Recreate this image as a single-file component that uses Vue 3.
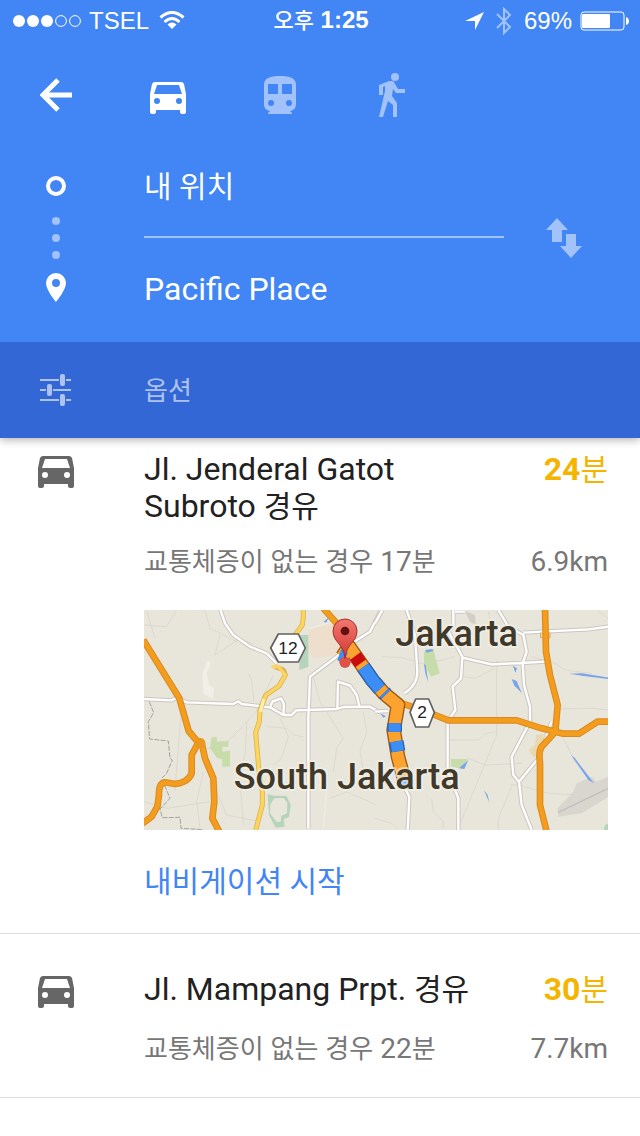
<script setup>
import { ref } from 'vue'

const origin = ref('내 위치')
const destination = ref('Pacific Place')
const mode = ref('car')

const carShape = 'M5 0H31Q33 0 34 2L36 12V30Q36 32 34 32H32Q30 32 30 30V28H6V30Q6 32 4 32H2Q0 32 0 30V12L2 2Q3 0 5 0ZM7 3 4 12H32L29 3ZM7 16A3 3 0 1 0 7 22A3 3 0 1 0 7 16ZM29 16A3 3 0 1 0 29 22A3 3 0 1 0 29 16Z'
const westRoads = 'M240 10 255 55 280 90 330 125 380 145 410 175M12 282 95 286 110 278 140 292 280 297 295 289 305 297 390 307 430 330H455L468 316 590 312 610 306 690 305 720 322M390 307 397 290 423 280 432 298 430 330M592 312 594 230 630 242 650 270 658 303M505 670V340L510 215 590 155 640 112 690 80 720 20'
const westHighways = 'M10 105 118 280 146 378 175 413 155 450V505Q145 532 105 537L75 532Q55 535 57 570L52 605 35 635 8 655M185 413 195 460 220 520 223 590 217 640 238 680M550 10 590 55'
const eastRoads = 'M95 15 120 90 127 200Q127 240 88 265M0 55 22 15M235 15V60L220 80 262 155 258 220 233 245 241 315 218 350V500L250 580 250 675M262 158 350 178 440 174 510 170M370 15 400 65 445 90 455 140 443 175 447 240 465 305 465 350 410 455 415 510 432 530 440 600 470 675M432 530 490 460 530 350M445 83 505 80 640 73 700 65M240 20H270M85 540 103 575 98 675M0 320 40 318'
const eastHighways = 'M80 295 150 318 220 346H425L500 370 565 386H612L668 350H704M510 10 513 140 525 210 548 300 541 380 500 425Q490 440 495 475V600L515 680'
const routeLine = 'M595 140 615 110 685 210 720 250 762 285 749 360 762 440 785 525'
const slowParts = 'M658 171 685 210 708 237M721 248 726 253M752 340 752 365M757 394 762 424'
</script>

<template>
  <main class="screen">
    <header class="top">
      <div class="status">
        <div class="status-side">
          <svg width="68" height="12" viewBox="0 0 68 12" fill="#fff">
            <circle cx="6" cy="6" r="6" /><circle cx="20" cy="6" r="6" /><circle cx="34" cy="6" r="6" />
            <g fill="none" stroke="#fff"><circle cx="48" cy="6" r="5.400" /><circle cx="62" cy="6" r="5.400" /></g>
          </svg>
          <span class="carrier">TSEL</span>
          <svg class="wifi" width="26" height="19" viewBox="0 0 26 19" fill="none" stroke="#fff" stroke-width="3">
            <path d="M1.500 6.500Q13-3.500 24.500 6.500M5.500 11Q13 4 20.500 11" />
            <path d="M8.500 13.500Q13 9.500 17.500 13.500L13 18Z" fill="#fff" stroke="none" />
          </svg>
        </div>
        <div class="clock"><span class="clock-ko">오후</span> 1:25</div>
        <div class="status-side right">
          <svg width="19" height="18" viewBox="0 0 19 18" fill="#fff"><path d="M19 0 10 18V9H0Z" /></svg>
          <svg class="bluetooth" width="16" height="28" viewBox="0 0 16 28" fill="none" stroke="#a1c2fa" stroke-width="2">
            <path d="M1 7 14 20 8 26V2L14 8 1 21" />
          </svg>
          <span class="percent">69%</span>
          <svg width="49" height="20" viewBox="0 0 49 20">
            <rect x="1" y="1" width="43" height="18" rx="3" fill="none" stroke="#fff" />
            <rect x="2" y="3" width="28" height="14" rx="1" fill="#fff" />
            <path d="M46 6Q49 7 49 10T46 14Z" fill="#fff" />
          </svg>
        </div>
      </div>

      <nav class="modes">
        <button type="button" aria-label="뒤로">
          <svg width="32" height="34" viewBox="0 0 32 34" fill="none" stroke="#fff" stroke-width="5"><path d="M18 2 3 17 18 32M3 17H32" /></svg>
        </button>
        <button type="button" aria-label="자동차" :class="{ dim: mode !== 'car' }" @click="mode = 'car'">
          <svg class="car-tab" width="36" height="32" viewBox="0 0 36 32" fill="#fff"><path fill-rule="evenodd" :d="carShape" /></svg>
        </button>
        <button type="button" aria-label="대중교통" :class="{ dim: mode !== 'transit' }" @click="mode = 'transit'">
          <svg width="32" height="38" viewBox="0 0 32 38" fill="#fff">
            <path fill-rule="evenodd" d="M16 0C26 0 32 2 32 9V28Q32 34 26 35L28 37V38H4V37L6 35Q0 34 0 28V9C0 2 6 0 16 0ZM4 8V18H14V8ZM18 8V18H28V8ZM7 24A3 3 0 1 0 7 30A3 3 0 1 0 7 24ZM25 24A3 3 0 1 0 25 30A3 3 0 1 0 25 24Z" />
          </svg>
        </button>
        <button type="button" aria-label="도보" :class="{ dim: mode !== 'walk' }" @click="mode = 'walk'">
          <svg width="26" height="44" viewBox="0 0 26 44" fill="#fff">
            <circle cx="16" cy="4" r="4" />
            <path d="M0 12 10 8H13Q15 8 16 11L19 16H26V20H17L14 16 13 23 18 30V44H14V32L9 28 4 44H0L6 18V13L4 14V22H0Z" />
          </svg>
        </button>
      </nav>

      <form class="places" @submit.prevent>
        <div class="trail">
          <span class="ring"></span>
          <span class="dots"><i></i><i></i><i></i></span>
          <svg width="20" height="29" viewBox="0 0 20 29" fill="#fff">
            <path fill-rule="evenodd" d="M10 0A10 10 0 0 0 0 10C0 17 10 29 10 29S20 17 20 10A10 10 0 0 0 10 0ZM10 6A4 4 0 1 1 10 14A4 4 0 1 1 10 6Z" />
          </svg>
        </div>
        <div class="fields">
          <input v-model="origin" class="origin" aria-label="출발지">
          <input v-model="destination" class="destination" aria-label="목적지">
        </div>
        <button class="swap" type="button" aria-label="출발지와 목적지 바꾸기" @click="[origin, destination] = [destination, origin]">
          <svg width="36" height="40" viewBox="0 0 36 40" fill="#a1c2fa"><path d="M11 0 22 12H16V24H6V12H0ZM20 16H30V28H36L25 40 14 28H20Z" /></svg>
        </button>
      </form>

      <button class="options" type="button">
        <svg width="32" height="32" viewBox="0 0 32 32" fill="#adc2ef">
          <path d="M0 5H19V7H0ZM26 5H31V7H26ZM0 15H6V17H0ZM13 15H31V17H13ZM0 25H19V27H0ZM26 25H31V27H26Z" />
          <rect x="20" width="5" height="12" rx="2" /><rect x="7" y="10" width="5" height="12" rx="2" /><rect x="20" y="20" width="5" height="12" rx="2" />
        </svg>
        <span class="options-label">옵션</span>
      </button>
    </header>

    <section class="routes">
      <article class="route">
        <svg class="car" width="36" height="32" viewBox="0 0 36 32" fill="#666"><path fill-rule="evenodd" :d="carShape" /></svg>
        <div class="body">
          <div class="line">
            <h2>Jl. Jenderal Gatot Subroto <span class="ko">경유</span></h2>
            <strong class="time">24<span class="ko">분</span></strong>
          </div>
          <div class="line sub">
            <p><span class="ko">교통체증이</span> <span class="ko">없는</span> <span class="ko">경우</span> 17<span class="ko">분</span></p>
            <span class="distance">6.9km</span>
          </div>
          <svg class="map" viewBox="0 0 1392 660" role="img" aria-label="지도">
            <defs>
              <linearGradient id="pin" x1="0" y1="0" x2="0" y2="1"><stop offset="0" stop-color="#f3786f" /><stop offset="1" stop-color="#cf3733" /></linearGradient>
            </defs>
            <rect width="1392" height="660" fill="#e8e5da" />
            <g transform="translate(-12 -15)" fill="none" stroke-linejoin="round">
              <path d="M505 75 600 50 620 110 590 150 520 160 505 130Z" fill="#eedfcd" />
              <path d="M480 90H505V185L478 195Z" fill="#b5d4bb" />
              <path d="M215 397 230 395 231 410 265 407V425H247V440L270 437V485H247V463L232 460 210 430Z" fill="#c7dda9" />
              <path d="M203 165 212 175 200 205 207 240 222 250 219 283 190 265 187 205Z" fill="#f2efe8" />
              <path d="M383 567 400 572 440 573 452 600 447 636 431 643 434 665 407 668 387 630ZM403 580 391 598 390 625 409 650 422 651 424 633 441 625 442 593 431 579Z" fill="#b5d4bb" fill-rule="evenodd" />
              <g stroke="#d6d2ca" stroke-width="2">
                <path d="M12 60 80 65 110 15M195 15 210 70 290 110M125 300 115 430 105 555M20 20 45 100M240 90 225 150 300 100 340 118M325 205 335 225 342 290M180 440 265 408 345 325 400 210M380 365 440 370 460 390 490 395M420 340 445 395 425 460 400 480M520 215 540 290 610 400 590 430 580 500M320 350 316 440 300 520 310 660M670 320 680 380 660 440 670 500M190 500 170 590 180 670M570 580 620 560 710 600M12 590 80 610 210 590M230 560 260 630 360 650" />
                <path d="M505 70 580 50M520 480 560 560 550 670" stroke="#f5f2ea" />
              </g>
              <path d="M28 290 41 323 25 350 29 402 85 408 90 460 97 465 80 505 65 520 90 580 60 612 67 638 120 637 123 670 190 674" stroke="#a3a3a1" stroke-width="3" stroke-dasharray="15 4" />
              <path :d="westRoads" stroke="#cdc6c0" stroke-width="13" />
              <path :d="westRoads" stroke="#fff" stroke-width="7" />
              <path d="M490 10V35L487 60 465 90M405 185 430 195 436 210 417 243 378 270 360 315 358 350 347 382 352 440 357 500 367 560V600L347 675" stroke="#ddb451" stroke-width="15" />
              <path d="M490 10V35L487 60 465 90M395 185H415L436 210 417 243 378 270 360 315 358 350 347 382 352 440 357 500 367 560V600L347 675" stroke="#fcd561" stroke-width="10" />
              <path d="M371 282 362 320" stroke="#fff0b4" stroke-width="9" />
              <path :d="westHighways" stroke="#d98a1d" stroke-width="20" />
              <path :d="westHighways" stroke="#f39c1e" stroke-width="14" />
              <circle cx="180" cy="414" r="16" fill="#ec981f" />
              <path d="M551 50 568 35 558 53Z" fill="#78a5ea" />
            </g>

            <g transform="translate(693 -15)" fill="none" stroke-linejoin="round">
              <path d="M147 140 175 133 194 205 168 215 147 180Z" fill="#c7dda9" />
              <path d="M228 462H280L255 490 228 485Z" fill="#c7dda9" />
              <path d="M483 390 505 387 500 450 475 455 462 435 480 420Z" fill="#ead9ae" />
              <path d="M548 610 595 560 605 535 650 515 665 530 700 515V575L620 625 550 635Z" fill="#d9d6cf" />
              <path d="M550 622 700 550" stroke="#c4bdb9" stroke-width="4" />
              <path d="M690 660 700 655V675H686Z" fill="#b5d4bb" />
              <path d="M270 18 300 30 302 60 285 50Z" fill="#d2cec8" />
              <path stroke="#d6d2ca" stroke-width="2" d="M20 155 80 158 150 178 240 155M265 215 300 220 360 190M365 165V390L250 670M225 405 310 405 335 385 365 380M280 460 330 480 440 475M470 155 540 175 570 195 650 205M555 312 650 310 700 315M365 110 350 60 340 20M405 540 430 540 520 565 600 570M170 580 175 620 205 650 205 670M700 40 670 20M410 545 370 640 370 675M0 640 50 655 70 675M565 400 600 470 660 535" />
              <path fill="#78a5ea" d="M410 222 425 228 440 263 418 242ZM414 182 426 190 421 203ZM583 206 620 205 700 218V222L620 212ZM588 450 600 460 657 535 640 525ZM327 555 338 570 343 593ZM147 178 152 180 160 233 151 205ZM15 325 33 334 25 338ZM252 490 280 465 268 492ZM150 135 172 132 175 138 155 143Z" />
              <path :d="eastRoads" stroke="#cdc6c0" stroke-width="13" />
              <path :d="eastRoads" stroke="#fff" stroke-width="7" />
              <path d="M497 82V98H525V82" stroke="#e5a13c" stroke-width="3" />
              <path :d="eastHighways" stroke="#d98a1d" stroke-width="20" />
              <path :d="eastHighways" stroke="#f39c1e" stroke-width="14" />
            </g>

            <g fill="none" stroke-linejoin="round">
              <path :d="routeLine" stroke="#9c5b14" stroke-width="44" />
              <path :d="routeLine" stroke="#fca22e" stroke-width="36" />
              <path d="M634 138 650 160" stroke="#c90d0d" stroke-width="40" />
              <path :d="slowParts" stroke="#2764b4" stroke-width="44" />
              <path :d="slowParts" stroke="#3c8df5" stroke-width="36" />
              <path d="M777 500 784 528" stroke="#78a9f0" stroke-width="40" />
              <path d="M580 150 594 112 612 130 594 158Z" fill="#3c8df5" />
            </g>
            <circle cx="603" cy="157" r="17" fill="#df5149" />
            <path d="M603 145C599 100 567 97 567 63A36 36 0 0 1 639 63C639 97 607 100 603 145Z" fill="url(#pin)" stroke="#a92d2b" stroke-width="3" />
            <circle cx="603" cy="63" r="13" fill="#64100d" />

            <g fill="#fff" stroke="#606060" stroke-width="5" stroke-linejoin="round">
              <path d="M403 72H463L484 114 463 156H403L380 114Z" />
              <path d="M815 267H854L871 307 854 351H815L798 307Z" />
            </g>
            <g class="road-number"><text x="432" y="131">12</text><text x="834" y="325">2</text></g>
            <g class="area"><text x="938" y="108">Jakarta</text><text x="608" y="538">South Jakarta</text></g>
          </svg>
          <a class="start" href="#start">내비게이션 시작</a>
        </div>
      </article>

      <article class="route compact">
        <svg class="car" width="36" height="32" viewBox="0 0 36 32" fill="#666"><path fill-rule="evenodd" :d="carShape" /></svg>
        <div class="body">
          <div class="line">
            <h2>Jl. Mampang Prpt. <span class="ko">경유</span></h2>
            <strong class="time">30<span class="ko">분</span></strong>
          </div>
          <div class="line sub">
            <p><span class="ko">교통체증이</span> <span class="ko">없는</span> <span class="ko">경우</span> 22<span class="ko">분</span></p>
            <span class="distance">7.7km</span>
          </div>
        </div>
      </article>
    </section>
  </main>
</template>

<style>
body {
  background: #fff;
}
</style>

<style scoped>
.screen {
  font-family: Roboto, "Noto Sans CJK KR", sans-serif;
  color: #212121;
}
svg {
  display: block;
  flex: none;
}
button {
  margin: 0;
  padding: 0;
  border: 0;
  background: none;
  font: inherit;
  cursor: pointer;
}
.top {
  position: relative;
  background: #4285f5;
  color: #fff;
  box-shadow: 0 2px 8px rgba(0, 0, 0, 0.3);
}
.status {
  display: grid;
  grid-template-columns: 1fr auto 1fr;
  align-items: center;
  height: 40px;
  padding: 0 11px 0 13px;
  font: 24px/40px "Liberation Sans", "Noto Sans CJK KR", sans-serif;
}
.status-side {
  display: flex;
  align-items: center;
  gap: 8px;
}
.right {
  justify-content: flex-end;
}
.wifi {
  margin-left: 2px;
}
.bluetooth {
  margin: 0 4px;
}
.clock {
  font-weight: 700;
}
.clock-ko {
  font-size: 22px;
  font-weight: 500;
}
.modes {
  display: flex;
  height: 112px;
}
.modes button {
  display: flex;
  align-items: center;
  justify-content: center;
  width: 112px;
  padding-bottom: 2px;
}
.modes .car-tab {
  margin-top: 6px;
}
.dim svg {
  opacity: 0.5;
}
.places {
  display: flex;
  height: 190px;
}
.trail {
  display: flex;
  flex-direction: column;
  align-items: center;
  width: 112px;
  padding-top: 24px;
  box-sizing: border-box;
}
.ring {
  width: 20px;
  height: 20px;
  box-sizing: border-box;
  border: 4px solid #fff;
  border-radius: 50%;
}
.dots {
  display: flex;
  flex-direction: column;
  gap: 9px;
  padding: 21px 0 14px;
}
.dots i {
  width: 8px;
  height: 8px;
  border-radius: 50%;
  background: #a1c2fa;
}
.fields {
  display: flex;
  flex: 1;
  flex-direction: column;
  margin-left: 32px;
  min-width: 0;
}
.fields input {
  width: 100%;
  margin: 0;
  padding: 0;
  border: 0;
  outline: 0;
  background: none;
  color: #fff;
  font-family: inherit;
}
.fields .origin {
  height: 86px;
  padding-bottom: 20px;
  box-sizing: border-box;
  border-bottom: 2px solid #a1c2fa;
  font-size: 30px;
}
.fields .destination {
  height: 102px;
  font-size: 32px;
}
.swap {
  display: flex;
  align-items: center;
  justify-content: center;
  width: 136px;
  padding: 0 16px 18px 0;
}
.options {
  display: flex;
  align-items: center;
  gap: 72px;
  width: 100%;
  height: 96px;
  padding-left: 40px;
  background: #3367d6;
  color: #adc2ef;
  font-size: 26px;
}
.options-label {
  padding-bottom: 4px;
}
.routes {
  margin-top: -24px;
}
.route {
  display: flex;
  padding: 37px 32px 32px 38px;
  border-bottom: 1px solid #ddd;
}
.car {
  margin: 5px 70px 0 0;
}
.body {
  flex: 1;
  min-width: 0;
}
.line {
  display: flex;
  justify-content: space-between;
  gap: 32px;
}
.line h2,
.line p {
  margin: 0;
  font-weight: 400;
}
.line h2 {
  max-width: 336px;
  font-size: 32px;
  line-height: 37px;
}
.line h2 .ko,
.time .ko {
  font-size: 30px;
  font-weight: 400;
  line-height: 1;
}
.time {
  flex: none;
  color: #f4b400;
  font-size: 32px;
  line-height: 37px;
}
.sub {
  padding-top: 21px;
  color: #777;
  font-size: 28px;
  line-height: 32px;
}
.compact .sub {
  padding-top: 25px;
}
.sub .ko {
  font-size: 26px;
  line-height: 1;
}
.map {
  width: 100%;
  margin-top: 32px;
}
.road-number text {
  font: 52px "Liberation Sans", sans-serif;
  text-anchor: middle;
  fill: #222;
}
.area text {
  font: 500 108px Roboto, sans-serif;
  text-anchor: middle;
  fill: #40392a;
  stroke: #f3f0e8;
  stroke-opacity: 0.7;
  stroke-width: 12px;
  stroke-linejoin: round;
  paint-order: stroke;
}
.start {
  display: block;
  padding-top: 33px;
  color: #4285f5;
  font-size: 30px;
  line-height: 38px;
  text-decoration: none;
}
</style>
